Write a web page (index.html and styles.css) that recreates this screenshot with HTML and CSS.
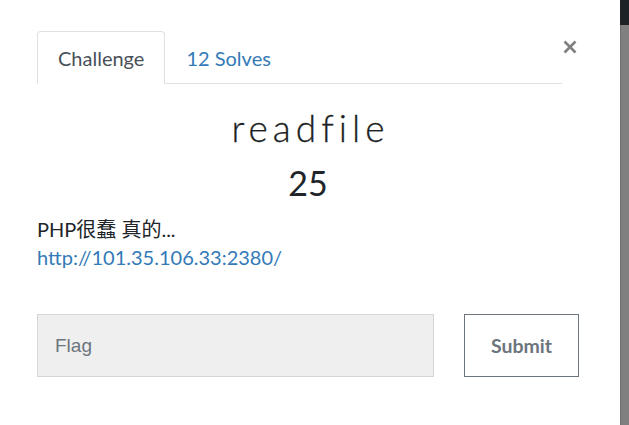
FILE: index.html
```html
<!DOCTYPE html>
<html lang="zh-Hant">
<head>
<meta charset="utf-8">
<title>readfile</title>
<link rel="stylesheet" href="styles.css">
</head>
<body>
<div class="page">
  <div class="modal">
    <div class="top">
      <ul class="tabs">
        <li class="tab active">Challenge</li>
        <li class="tab"><a href="#">12 Solves</a></li>
      </ul>
      <button class="close" aria-label="Close">
        <svg width="14" height="14" viewBox="0 0 14 14"><path d="M1.5 1.5 L12.5 12.5 M12.5 1.5 L1.5 12.5" stroke="#808080" stroke-width="2.6" fill="none"/></svg>
      </button>
    </div>
    <h1 class="title">readfile</h1>
    <h2 class="value">25</h2>
    <div class="desc">
      <p>PHP很蠢 真的...</p>
      <p><a href="#">http://101.35.106.33:2380/</a></p>
    </div>
    <form class="submit-row">
      <input class="flag" type="text" placeholder="Flag">
      <button class="submit" type="button">Submit</button>
    </form>
  </div>
  <div class="scrollbar"><div class="thumb-top"></div><div class="track"></div></div>
</div>
</body>
</html>
```
FILE: styles.css
```css
html, body {
  margin: 0;
  padding: 0;
  background: #fff;
}
body {
  font-family: Lato, "Noto Sans CJK TC", sans-serif;
  color: #212529;
}
.page {
  display: flex;
  height: 425px;
  overflow: hidden;
}
.modal {
  flex: 1;
  padding: 31px 41px 0 37px;
}
.top {
  display: flex;
  align-items: flex-start;
}
.tabs {
  list-style: none;
  margin: 0;
  padding: 0;
  display: flex;
  width: 525px;
  border-bottom: 1px solid #dee2e6;
}
.tab {
  font-size: 20px;
  line-height: 27px;
  padding: 13px 20px 11px;
  border: 1px solid transparent;
  border-radius: 4px 4px 0 0;
  margin-bottom: -1px;
  color: #495057;
}
.tab.active {
  border-color: #dee2e6 #dee2e6 #fff;
  background: #fff;
}
.tab a {
  color: #337ab7;
  text-decoration: none;
}
.close {
  margin-left: auto;
  margin-top: 9px;
  margin-right: 2px;
  width: 14px;
  height: 14px;
  padding: 0;
  border: 0;
  background: none;
  display: block;
}
.close svg { display: block; }
.title {
  margin: 22px 0 0;
  text-align: center;
  font-family: Lato, sans-serif;
  font-weight: 300;
  font-size: 37px;
  line-height: 1.2;
  letter-spacing: 5px;
  text-indent: 5px;
  color: #1c1f23;
  -webkit-text-stroke: 0.3px #1c1f23;
}
.value {
  margin: 13px 0 0;
  text-align: center;
  font-weight: 400;
  font-size: 34px;
  line-height: 1.2;
  color: #212529;
}
.desc {
  margin-top: 11px;
  font-size: 20px;
  line-height: 28px;
}
.desc p { margin: 0; }
.desc a {
  color: #337ab7;
  text-decoration: none;
}
.submit-row {
  display: flex;
  gap: 30px;
  margin: 43px 0 0;
}
.flag {
  box-sizing: border-box;
  width: 397px;
  height: 63px;
  background: #efefef;
  border: 1px solid #d4d6d8;
  border-radius: 0;
  padding: 0 17px;
  font-family: "Liberation Sans", Arial, sans-serif;
  font-size: 19px;
  color: #495057;
  outline: none;
}
.flag::placeholder { color: #6c757d; }
.submit {
  box-sizing: border-box;
  width: 115px;
  height: 63px;
  background: #fff;
  border: 1px solid #6c757d;
  border-radius: 0;
  font-family: Lato, sans-serif;
  font-weight: 700;
  font-size: 19.5px;
  color: #6c757d;
  padding: 0;
}
.scrollbar {
  width: 9px;
  display: flex;
  flex-direction: column;
}
.thumb-top {
  height: 25px;
  background: #1d2226;
}
.track {
  flex: 1;
  background: #808080;
  border-left: 1px solid #6f6f6f;
}
```
